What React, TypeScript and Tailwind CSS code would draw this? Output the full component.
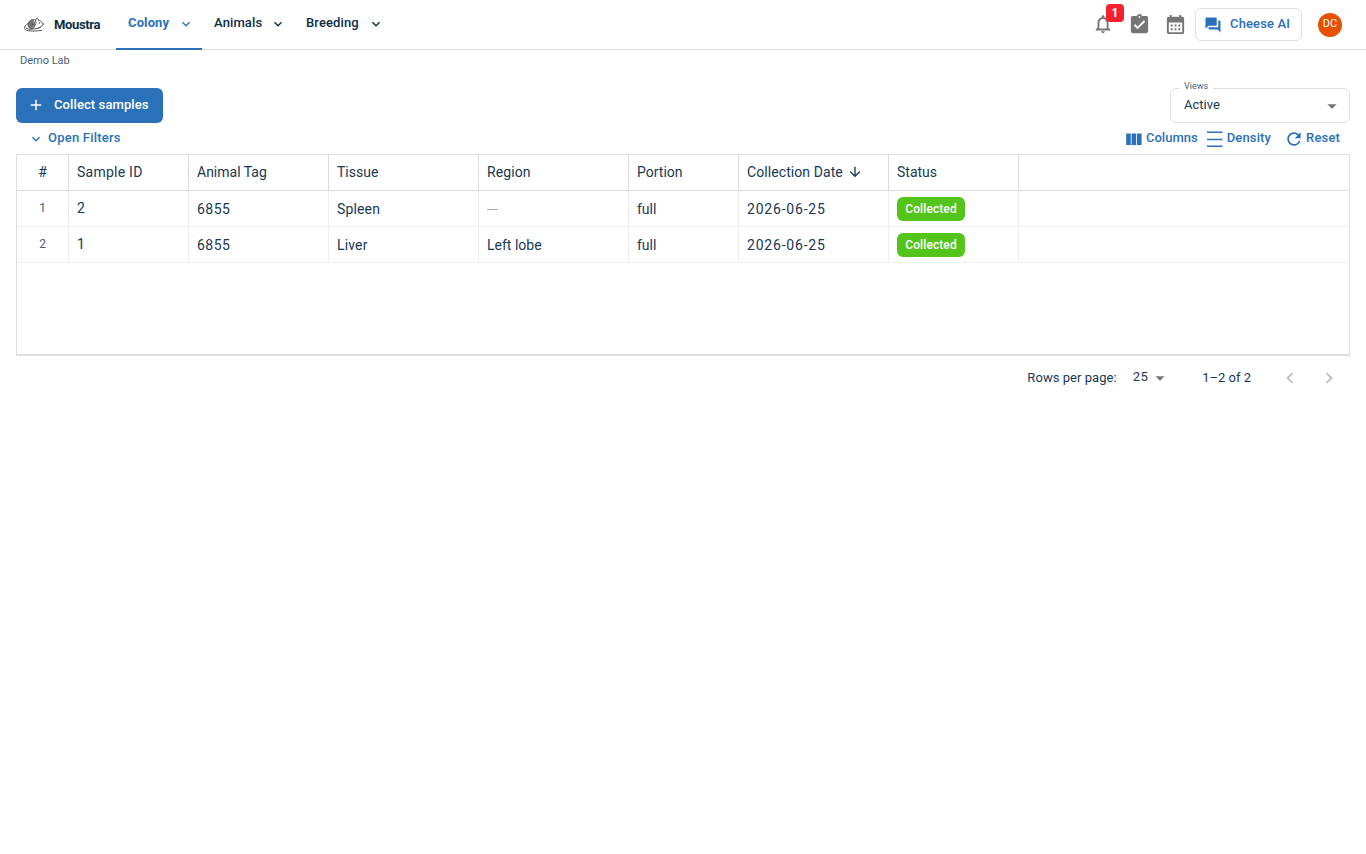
import { clsx } from "clsx";
import {
  MdAdd,
  MdArrowDownward,
  MdArrowDropDown,
  MdAssignmentTurnedIn,
  MdCalendarMonth,
  MdExpandMore,
  MdForum,
  MdKeyboardArrowLeft,
  MdKeyboardArrowRight,
  MdNotificationsNone,
  MdRefresh,
} from "react-icons/md";

interface Sample {
  id: string;
  animalTag: string;
  tissue: string;
  region?: string;
  portion: string;
  collectedOn: string;
  status: string;
}

const samples: Sample[] = [
  { id: "2", animalTag: "6855", tissue: "Spleen", portion: "full", collectedOn: "2026-06-25", status: "Collected" },
  { id: "1", animalTag: "6855", tissue: "Liver", region: "Left lobe", portion: "full", collectedOn: "2026-06-25", status: "Collected" },
];

const columns = [
  { label: "#", width: "w-[52px] justify-center", text: "" },
  { label: "Sample ID", width: "w-[120px]", text: "tracking-[0.25px]" },
  { label: "Animal Tag", width: "w-[140px]", text: "tracking-[0px]" },
  { label: "Tissue", width: "w-[150px]", text: "tracking-[0px]" },
  { label: "Region", width: "w-[150px]", text: "tracking-[0.1px]" },
  { label: "Portion", width: "w-[110px]", text: "tracking-[0px]" },
  { label: "Collection Date", width: "w-[150px]", text: "tracking-[0.08px]" },
  { label: "Status", width: "w-[130px]", text: "tracking-[0px]" },
];

const cell = "flex h-full shrink-0 items-center border-r border-[#efefef] px-2";

function MouseLogo() {
  return (
    <svg width="20" height="16" viewBox="0 0 20 16" fill="none" stroke="#555" strokeWidth="1" strokeLinecap="round">
      <path d="M19.3 7C17.6 4.6 15.6 3.3 14.2 3.2C14.6 1.9 13.8 1 12.8 1.4C12 1.7 11.6 2.5 11.7 3.2C8.7 1.4 4.6 3.4 4.2 7.2C3.9 9.8 5.5 11.7 8.4 12.2L14.2 11.3C16.5 10.5 18.5 8.9 19.3 7Z" />
      <path d="M4.3 6.4C1.7 7.8 0.2 9.8 0.6 11.6C1.3 14.3 9.2 14.6 17.6 13.4" />
      <ellipse cx="7.8" cy="7.4" rx="3.2" ry="3.9" fill="#999" />
      <ellipse cx="7.8" cy="7.4" rx="1.3" ry="1.9" fill="#777" />
      <path d="M2 11.1C3.3 12 5.2 12.4 7.3 12.2" />
      <path d="M11.7 3.2C11.4 4.6 11.6 5.6 12.4 6M14.6 10.9L16.6 10" />
      <circle cx="15.5" cy="5.9" r="0.7" fill="#222" stroke="none" />
    </svg>
  );
}

function NavItem({ label, active, className }: { label: string; active?: boolean; className: string }) {
  return (
    <a
      href="#"
      className={clsx(
        "flex h-[50px] items-center justify-between border-b-2 pr-2 pb-[2px] pl-3 text-[13px]",
        active ? "border-[#2a71b9] font-bold text-[#2a71b9]" : "border-transparent font-medium text-[#0c2d48]",
        className,
      )}
    >
      <span className="tracking-[0.12px]">{label}</span>
      <MdExpandMore className="mt-[2px] size-4" />
    </a>
  );
}

function Header() {
  return (
    <header className="flex h-[50px] items-start border-b border-[#dcdcdf] pl-6">
      <div className="flex h-[49px] w-[92px] shrink-0 items-center gap-2.5">
        <MouseLogo />
        <span className="text-[13px] font-bold tracking-[-0.35px] text-[#0c2d48]">Moustra</span>
      </div>
      <NavItem label="Colony" active className="w-[86px]" />
      <NavItem label="Animals" className="w-[92px]" />
      <NavItem label="Breeding" className="w-[98px]" />
      <div className="ml-auto flex h-[49px] items-center pr-6 text-[#757575]">
        <div className="relative mr-[14px] mb-px">
          <MdNotificationsNone className="size-[22px]" />
          <span className="absolute -top-[9px] left-[14px] flex h-[18px] w-[18px] items-center justify-center rounded bg-[#f5222d] text-xs font-bold text-white">
            1
          </span>
        </div>
        <MdAssignmentTurnedIn className="mr-[13px] mb-px size-[23px]" />
        <MdCalendarMonth className="mr-2 mb-px size-[23px]" />
        <button className="mr-4 flex h-[33px] w-[107px] items-center rounded-md border border-[#dcdfe3] pl-2 text-[13px] font-medium text-[#2a71b9]">
          <MdForum className="mr-2 size-[18px]" />
          <span className="pb-0.5 tracking-[0.15px]">Cheese AI</span>
        </button>
        <div className="flex size-6 items-center justify-center rounded-full bg-[#e65100] text-[11px] text-white">DC</div>
      </div>
    </header>
  );
}

function Toolbar() {
  return (
    <div className="flex h-[31px] items-center px-[10px] text-[13px] font-medium text-[#2a71b9]">
      <button className="flex items-center pl-0.5">
        <MdExpandMore className="mt-px mr-1 size-4" />
        <span className="pb-0.5 tracking-[0.22px]">Open Filters</span>
      </button>
      <button className="ml-auto flex items-center">
        <svg className="mr-1 size-4" viewBox="0 0 16 16" fill="currentColor">
          <path d="M0.2 2.5h4.6v11.6H0.2zM5.6 2.5h4.6v11.6H5.6zM11 2.5h4.6v11.6H11z" />
        </svg>
        <span className="pb-0.5">Columns</span>
      </button>
      <button className="ml-[9px] flex items-center">
        <svg className="mr-1 size-4" viewBox="0 0 16 16" fill="currentColor">
          <path d="M0 0.5h15.5v1.4H0zM0 7.8h15.5v1.4H0zM0 14.6h15.5v1.4H0z" />
        </svg>
        <span className="pb-0.5 tracking-[0.15px]">Density</span>
      </button>
      <button className="ml-[13px] flex items-center">
        <MdRefresh className="mr-0.5 size-5" />
        <span className="pb-0.5 tracking-[0.15px]">Reset</span>
      </button>
    </div>
  );
}

function SampleRow({ sample, index }: { sample: Sample; index: number }) {
  return (
    <div className="flex h-9 border-b border-[#efefef]">
      <div className={clsx(cell, "w-[52px] justify-center pb-0.5 text-xs text-[#496074]")}>{index + 1}</div>
      <div className={clsx(cell, "w-[120px] pb-0.5")}>{sample.id}</div>
      <div className={clsx(cell, "w-[140px] tracking-[0.5px]")}>{sample.animalTag}</div>
      <div className={clsx(cell, "w-[150px] tracking-[0.15px]")}>{sample.tissue}</div>
      <div className={clsx(cell, "w-[150px]")}>
        {sample.region ?? <span className="font-['Liberation_Sans',sans-serif] text-[11px] text-[#8796a3]">—</span>}
      </div>
      <div className={clsx(cell, "w-[110px]")}>{sample.portion}</div>
      <div className={clsx(cell, "w-[150px] tracking-[0.8px]")}>{sample.collectedOn}</div>
      <div className={clsx(cell, "w-[130px]")}>
        <span className="flex h-6 w-[68px] items-center justify-center rounded-md bg-[#52c41a] text-xs font-medium tracking-[0.1px] text-white">
          {sample.status}
        </span>
      </div>
    </div>
  );
}

function SampleGrid() {
  return (
    <div className="h-[202px] border border-b-2 border-[#dcdfe3] text-sm text-[#193853]">
      <div className="flex h-9 border-b border-[#dcdcdf]">
        {columns.map((column) => (
          <div
            key={column.label}
            className={clsx("flex shrink-0 items-center border-r border-[#dcdcdf] px-2 pb-px", column.width, column.text)}
          >
            {column.label}
            {column.label === "Collection Date" && <MdArrowDownward className="ml-1 size-4" />}
          </div>
        ))}
      </div>
      {samples.map((sample, index) => (
        <SampleRow key={sample.id} sample={sample} index={index} />
      ))}
    </div>
  );
}

function Pagination() {
  return (
    <div className="flex h-11 items-center justify-end pr-[11px] text-[13px] text-[#193853]">
      <span className="mr-4 tracking-[0.05px]">Rows per page:</span>
      <span className="pb-0.5 tracking-[0.4px]">25</span>
      <MdArrowDropDown className="mr-[31px] ml-[1px] size-[22px] text-[#757575]" />
      <span className="mr-7">1–2 of 2</span>
      <MdKeyboardArrowLeft className="mr-[18px] size-[22px] text-[#bdbdbd]" />
      <MdKeyboardArrowRight className="-mx-px size-[22px] text-[#bdbdbd]" />
    </div>
  );
}

export default function App() {
  return (
    <div className="min-h-screen bg-white font-[Roboto,'Noto_Sans',sans-serif] text-[#0c2d48]">
      <Header />
      <div className="h-[38px] px-5 pt-[3px] text-[11px] leading-4 text-[#496074]">Demo Lab</div>
      <main className="px-4">
        <div className="flex h-[35px] justify-between">
          <button className="flex w-[147px] items-center rounded-md bg-[#2a71b9] pl-[11px] text-[13px] font-medium text-white">
            <MdAdd className="mr-[9px] mb-px size-[18px]" />
            <span className="pb-0.5 tracking-[0.1px]">Collect samples</span>
          </button>
          <div className="relative flex w-[180px] items-center justify-between rounded-md border border-[#dcdfe3] pr-[6px] pl-[13px] text-[13px] text-[#193853]">
            <span className="absolute -top-[10px] left-2 bg-white px-[5px] text-[9px] leading-[14px] text-[#496074]">
              Views
            </span>
            <span className="pb-0.5">Active</span>
            <MdArrowDropDown className="size-[22px] text-[#757575]" />
          </div>
        </div>
        <Toolbar />
        <SampleGrid />
        <Pagination />
      </main>
    </div>
  );
}
